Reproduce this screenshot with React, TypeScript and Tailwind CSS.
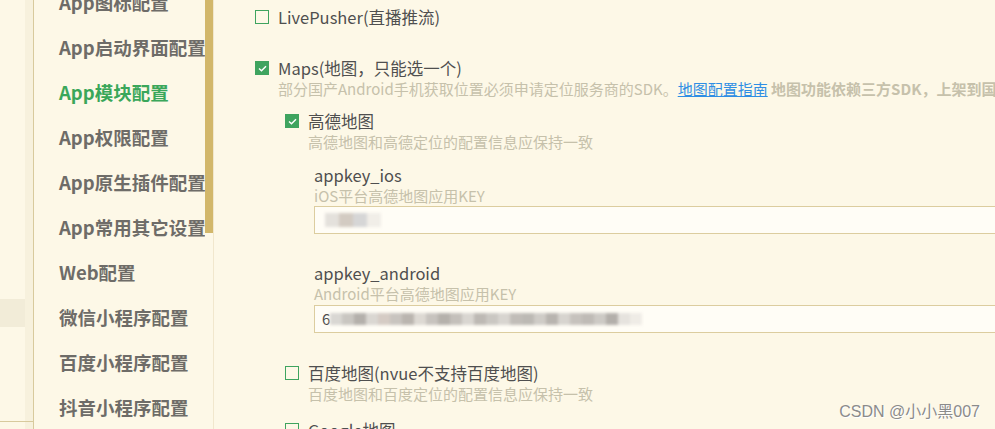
import React from 'react';

const font = { fontFamily: '"Microsoft YaHei", "Noto Sans CJK SC", "Noto Sans", sans-serif' };

const navItems = [
  'App图标配置',
  'App启动界面配置',
  'App模块配置',
  'App权限配置',
  'App原生插件配置',
  'App常用其它设置',
  'Web配置',
  '微信小程序配置',
  '百度小程序配置',
  '抖音小程序配置',
];

function Check({ checked }: { checked?: boolean }) {
  if (checked) {
    return (
      <span className="flex h-[14px] w-[14px] shrink-0 items-center justify-center bg-[#3fa45f]">
        <svg width="9" height="7" viewBox="0 0 9 7" fill="none">
          <path d="M1 3.5 L3.5 5.8 L8 1.2" stroke="#fff" strokeWidth="1.4" />
        </svg>
      </span>
    );
  }
  return <span className="h-[14px] w-[14px] shrink-0 border border-[#3fa45f]" />;
}

function Option({ checked, label }: { checked?: boolean; label: string }) {
  return (
    <div className="flex h-[22px] items-center gap-[9px]">
      <Check checked={checked} />
      <span className="whitespace-nowrap text-[16.5px] text-[#4f4f4f]">{label}</span>
    </div>
  );
}

function Desc({ children, className = '' }: { children: React.ReactNode; className?: string }) {
  return (
    <div className={`h-[20px] whitespace-nowrap text-[15px] leading-[20px] text-[#c6c1ab] ${className}`}>
      {children}
    </div>
  );
}

function Blur({ widths, size = 12 }: { widths: string[]; size?: number }) {
  return (
    <div className="flex items-center blur-[1.5px]">
      {widths.map((c, i) => (
        <span key={i} style={{ background: c, width: size, height: size }} />
      ))}
    </div>
  );
}

export default function App() {
  return (
    <div className="relative flex h-[429px] w-[995px] overflow-hidden bg-[#fdf8e7]" style={font}>
      {/* far left strip */}
      <div className="flex h-full w-[34px] shrink-0 border-r border-[#d8ca9d]">
        <div className="flex h-full w-[25px] flex-col">
          <div className="h-[299px]" />
          <div className="h-[28px] bg-[#f2ecd8]" />
          <div className="h-[94px]" />
          <div className="border-t border-[#d8ca9d]" />
        </div>
        <div className="h-full w-[8px] bg-[#f7f1dd]">
          <div className="h-[421px]" />
          <div className="border-t border-[#d8ca9d]" />
        </div>
      </div>

      {/* sidebar */}
      <div className="flex h-full w-[180px] shrink-0 border-r border-[#f1e7cd]">
        <div className="h-full w-[171px] overflow-hidden">
          <div className="mt-[-20px] pl-[25px]">
            {navItems.map((n) => (
              <div
                key={n}
                className={`flex h-[45px] items-center whitespace-nowrap text-[18.5px] font-bold ${
                  n === 'App模块配置' ? 'text-[#3aa75a]' : 'text-[#6e6c68]'
                }`}
              >
                {n}
              </div>
            ))}
          </div>
        </div>
        <div className="h-[233px] w-[8px] bg-[#d2b76a]" />
      </div>

      {/* main */}
      <div className="min-w-0 flex-1 pl-[41px] pt-[6px]">
        <Option label="LivePusher(直播推流)" />

        <div className="mt-[29px]">
          <Option checked label="Maps(地图，只能选一个)" />
          <Desc className="pl-[23px]">
            部分国产Android手机获取位置必须申请定位服务商的SDK。
            <span className="text-[#2f8ee4] underline">地图配置指南</span>{' '}
            <span className="font-bold">地图功能依赖三方SDK，上架到国内应用市场需要在隐私政策中说明</span>
          </Desc>
        </div>

        <div className="mt-[11px] pl-[30px]">
          <Option checked label="高德地图" />
          <Desc className="pl-[23px]">高德地图和高德定位的配置信息应保持一致</Desc>

          <div className="pl-[29px]">
            <div className="mt-[12px] h-[22px] text-[16.5px] leading-[22px] text-[#4f4f4f]">appkey_ios</div>
            <Desc>iOS平台高德地图应用KEY</Desc>
            <div className="flex h-[28px] w-[720px] items-center border border-[#dccd9f] bg-[#fffdf6] pl-[10px]">
              <Blur size={14} widths={['#e4e1dc', '#d3cbc2', '#d6d6d6', '#f1eee8']} />
            </div>

            <div className="mt-[28px] h-[22px] text-[16.5px] leading-[22px] text-[#4f4f4f]">appkey_android</div>
            <Desc>Android平台高德地图应用KEY</Desc>
            <div className="mt-[1px] flex h-[28px] w-[720px] items-center border border-[#dccd9f] bg-[#fffdf6] pl-[7px]">
              <span className="text-[15px] text-[#4f4f4f]">6</span>
              <Blur
                widths={[
                  '#d9d7d3', '#c9c6c1', '#b4b0ab', '#dad7d2', '#d5cbc4', '#c8c4bf', '#bab5af', '#ddd9d3',
                  '#c7c3be', '#b5b1ab', '#c4c0bb', '#d9d6d1', '#bdb9b4', '#cac7c2', '#d8d5d0', '#c1bdb8',
                  '#bcb9b4', '#cfccc7', '#b8b4af', '#d7d4cf', '#c6c2bd', '#bfbbb6', '#cdcac5', '#b3afaa',
                  '#e6e3de', '#efece6',
                ]}
              />
            </div>
          </div>

          <div className="mt-[29px]">
            <Option label="百度地图(nvue不支持百度地图)" />
            <Desc className="pl-[23px]">百度地图和百度定位的配置信息应保持一致</Desc>
          </div>

          <div className="mt-[15px]">
            <Option label="Google地图" />
          </div>
        </div>
      </div>

      {/* watermark */}
      <div
        className="absolute right-[15px] top-[400px] whitespace-nowrap text-[16px] text-[#8b8b8b]"
        style={{ fontFamily: '"Liberation Sans", "Noto Sans CJK SC", sans-serif', textShadow: '1px 1px 0 #fff' }}
      >
        CSDN @小小黑007
      </div>
    </div>
  );
}
